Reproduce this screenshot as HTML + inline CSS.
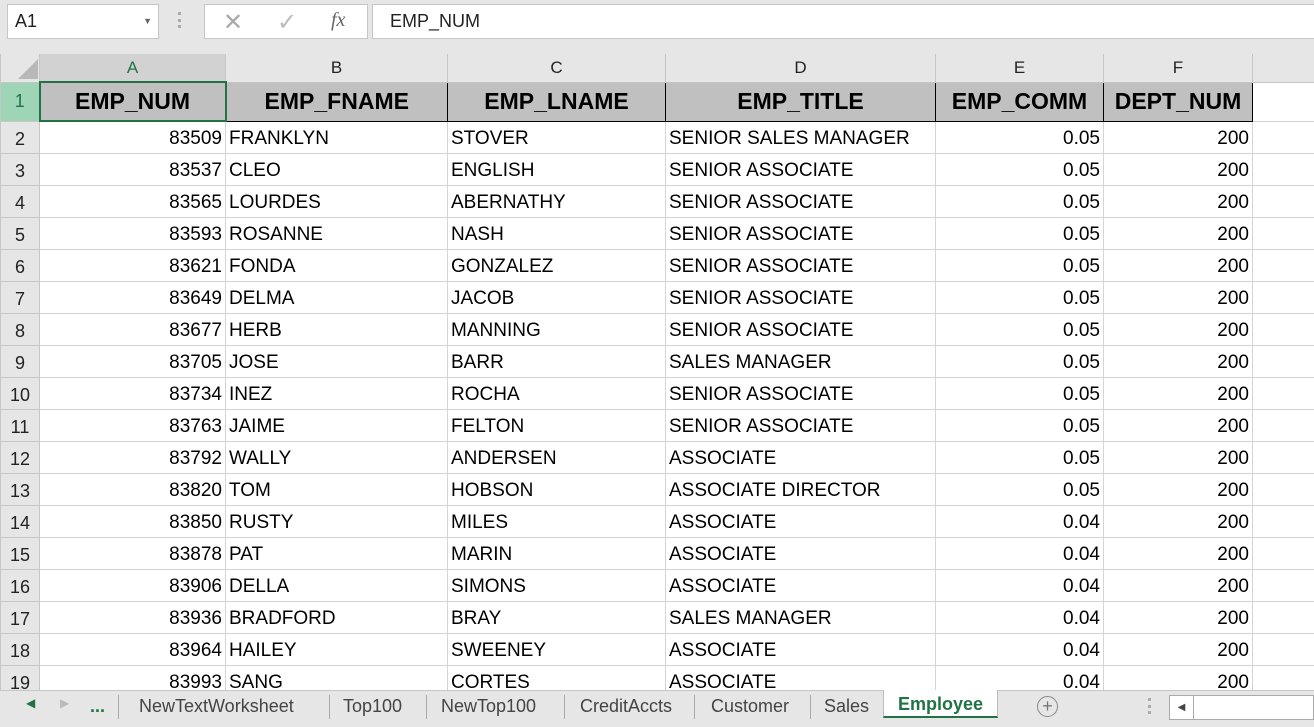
<!DOCTYPE html>
<html><head><style>
*{box-sizing:border-box;margin:0;padding:0}
body{width:1314px;height:727px;overflow:hidden;background:#fff;font-family:"Liberation Sans",Arial,sans-serif;position:relative}
.top{position:absolute;left:0;top:0;width:1314px;height:54px;background:#e6e6e6}
.box{position:absolute;background:#fff;border:1px solid #c6c6c6}
table{position:absolute;left:0;top:54px;width:1314px;border-collapse:collapse;table-layout:fixed}
td{border:1px solid #d4d4d4;font-size:19px;color:#000;white-space:nowrap;overflow:hidden;padding:0 3px;height:32px;line-height:28px;vertical-align:bottom}
tr.ch td{height:28px;line-height:26px;vertical-align:middle;background:#e6e6e6;text-align:center;color:#222;border-color:#c6c6c6;border-top:none;font-size:17px}
td.rh{background:#e6e6e6;text-align:center;padding:0;border-color:#c6c6c6;color:#222;font-size:18px}
tr.h td.c{background:#c0c0c0;font-weight:bold;font-size:23px;text-align:center;border:1px solid #000;height:39px;line-height:37px;vertical-align:middle}
td.r{text-align:right}
.tabs{position:absolute;left:0;top:690px;width:1314px;height:37px;background:#e6e6e6;border-top:1px solid #c6c6c6;font-size:18px;color:#444}
.tab{position:absolute;top:0;height:30px;line-height:30px;padding:0 10px}
.sep{position:absolute;top:4px;width:1px;height:24px;background:#aaa}
</style></head><body>
<div class="top">
 <div class="box" style="left:7px;top:4px;width:152px;height:35px;font-size:18px;line-height:33px;padding-left:7px;color:#222">A1<span style="position:absolute;right:6px;top:0;font-size:9px;color:#666">▼</span></div>
 <div style="position:absolute;left:178px;top:12px;width:3px;height:16px;border-left:3px dotted #aaa"></div>
 <div class="box" style="left:204px;top:4px;width:164px;height:35px;color:#aaa">
  <span style="position:absolute;left:18px;top:3px;font-size:24px">✕</span>
  <span style="position:absolute;left:72px;top:3px;font-size:24px;color:#bbb">✓</span>
  <span style="position:absolute;left:126px;top:4px;font-size:20px;font-style:italic;font-family:'Liberation Serif',serif;color:#666">fx</span>
 </div>
 <div class="box" style="left:372px;top:4px;width:950px;height:35px;font-size:18px;line-height:33px;padding-left:17px;color:#222">EMP_NUM</div>
</div>
<table>
<colgroup><col style="width:39px"><col style="width:186px"><col style="width:222px"><col style="width:218px"><col style="width:270px"><col style="width:168px"><col style="width:149px"><col style="width:62px"></colgroup>
<tr class="ch"><td style="background:#e6e6e6"><div style="width:0;height:0;border-left:20px solid transparent;border-bottom:20px solid #b8b8b8;margin:3px 0 0 14px"></div></td><td style="background:#d2d2d2;color:#217346;border-bottom:2px solid #217346">A</td><td>B</td><td>C</td><td>D</td><td>E</td><td>F</td><td></td></tr>
<tr class="h"><td class="rh" style="background:#9fd5b7;color:#217346;height:39px;vertical-align:middle;line-height:37px">1</td><td class="c" style="border:2px solid #217346">EMP_NUM</td><td class="c">EMP_FNAME</td><td class="c">EMP_LNAME</td><td class="c">EMP_TITLE</td><td class="c">EMP_COMM</td><td class="c">DEPT_NUM</td><td></td></tr>
<tr><td class="rh">2</td><td class="r">83509</td><td>FRANKLYN</td><td>STOVER</td><td>SENIOR SALES MANAGER</td><td class="r">0.05</td><td class="r">200</td><td></td></tr>
<tr><td class="rh">3</td><td class="r">83537</td><td>CLEO</td><td>ENGLISH</td><td>SENIOR ASSOCIATE</td><td class="r">0.05</td><td class="r">200</td><td></td></tr>
<tr><td class="rh">4</td><td class="r">83565</td><td>LOURDES</td><td>ABERNATHY</td><td>SENIOR ASSOCIATE</td><td class="r">0.05</td><td class="r">200</td><td></td></tr>
<tr><td class="rh">5</td><td class="r">83593</td><td>ROSANNE</td><td>NASH</td><td>SENIOR ASSOCIATE</td><td class="r">0.05</td><td class="r">200</td><td></td></tr>
<tr><td class="rh">6</td><td class="r">83621</td><td>FONDA</td><td>GONZALEZ</td><td>SENIOR ASSOCIATE</td><td class="r">0.05</td><td class="r">200</td><td></td></tr>
<tr><td class="rh">7</td><td class="r">83649</td><td>DELMA</td><td>JACOB</td><td>SENIOR ASSOCIATE</td><td class="r">0.05</td><td class="r">200</td><td></td></tr>
<tr><td class="rh">8</td><td class="r">83677</td><td>HERB</td><td>MANNING</td><td>SENIOR ASSOCIATE</td><td class="r">0.05</td><td class="r">200</td><td></td></tr>
<tr><td class="rh">9</td><td class="r">83705</td><td>JOSE</td><td>BARR</td><td>SALES MANAGER</td><td class="r">0.05</td><td class="r">200</td><td></td></tr>
<tr><td class="rh">10</td><td class="r">83734</td><td>INEZ</td><td>ROCHA</td><td>SENIOR ASSOCIATE</td><td class="r">0.05</td><td class="r">200</td><td></td></tr>
<tr><td class="rh">11</td><td class="r">83763</td><td>JAIME</td><td>FELTON</td><td>SENIOR ASSOCIATE</td><td class="r">0.05</td><td class="r">200</td><td></td></tr>
<tr><td class="rh">12</td><td class="r">83792</td><td>WALLY</td><td>ANDERSEN</td><td>ASSOCIATE</td><td class="r">0.05</td><td class="r">200</td><td></td></tr>
<tr><td class="rh">13</td><td class="r">83820</td><td>TOM</td><td>HOBSON</td><td>ASSOCIATE DIRECTOR</td><td class="r">0.05</td><td class="r">200</td><td></td></tr>
<tr><td class="rh">14</td><td class="r">83850</td><td>RUSTY</td><td>MILES</td><td>ASSOCIATE</td><td class="r">0.04</td><td class="r">200</td><td></td></tr>
<tr><td class="rh">15</td><td class="r">83878</td><td>PAT</td><td>MARIN</td><td>ASSOCIATE</td><td class="r">0.04</td><td class="r">200</td><td></td></tr>
<tr><td class="rh">16</td><td class="r">83906</td><td>DELLA</td><td>SIMONS</td><td>ASSOCIATE</td><td class="r">0.04</td><td class="r">200</td><td></td></tr>
<tr><td class="rh">17</td><td class="r">83936</td><td>BRADFORD</td><td>BRAY</td><td>SALES MANAGER</td><td class="r">0.04</td><td class="r">200</td><td></td></tr>
<tr><td class="rh">18</td><td class="r">83964</td><td>HAILEY</td><td>SWEENEY</td><td>ASSOCIATE</td><td class="r">0.04</td><td class="r">200</td><td></td></tr>
<tr><td class="rh">19</td><td class="r">83993</td><td>SANG</td><td>CORTES</td><td>ASSOCIATE</td><td class="r">0.04</td><td class="r">200</td><td></td></tr>
</table>
<div class="tabs">
 <span style="position:absolute;left:26px;top:5px;font-size:12px;color:#217346">◀</span>
 <span style="position:absolute;left:60px;top:5px;font-size:12px;color:#bbb">▶</span>
 <span style="position:absolute;left:90px;top:0;font-weight:bold;color:#217346;line-height:30px">...</span>
 <div class="sep" style="left:118px"></div>
 <div class="tab" style="left:129px">NewTextWorksheet</div>
 <div class="sep" style="left:329px"></div>
 <div class="tab" style="left:333px">Top100</div>
 <div class="sep" style="left:426px"></div>
 <div class="tab" style="left:431px">NewTop100</div>
 <div class="sep" style="left:564px"></div>
 <div class="tab" style="left:570px">CreditAccts</div>
 <div class="sep" style="left:694px"></div>
 <div class="tab" style="left:701px">Customer</div>
 <div class="sep" style="left:810px"></div>
 <div class="tab" style="left:814px">Sales</div>
 <div style="position:absolute;left:883px;top:-1px;width:115px;height:28px;background:#fff;border-left:1px solid #bbb;border-right:1px solid #bbb;border-bottom:2px solid #217346;color:#217346;font-weight:bold;text-align:center;line-height:28px">Employee</div>
 <div style="position:absolute;left:1037px;top:5px;width:21px;height:21px;border:1.5px solid #888;border-radius:50%;text-align:center;line-height:18px;font-size:18px;color:#777">+</div>
 <div style="position:absolute;left:1148px;top:7px;height:16px;border-left:3px dotted #aaa"></div>
 <div style="position:absolute;left:1169px;top:4px;width:145px;height:25px;background:#fff;border:1px solid #aaa"><div style="position:absolute;left:0;top:0;width:24px;height:23px;border-right:1px solid #aaa;font-size:10px;line-height:23px;text-align:center;color:#444">◀</div></div>
</div>
</body></html>
